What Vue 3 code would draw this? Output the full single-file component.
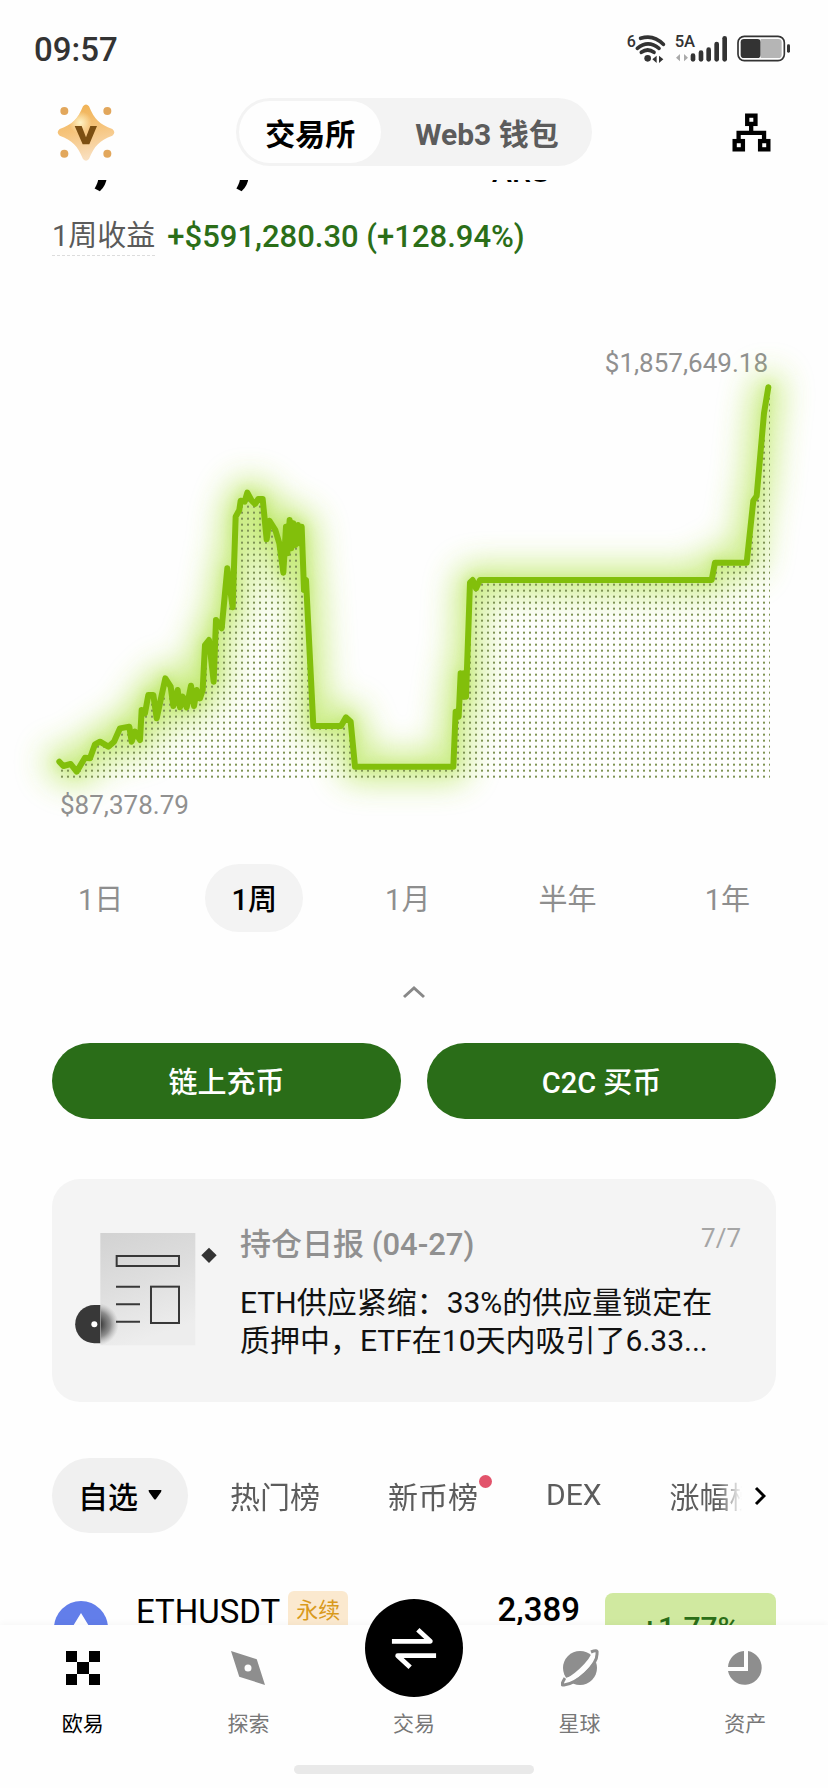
<script setup>
import { ref } from 'vue'

const ranges = ['1日', '1周', '1月', '半年', '1年']
const activeRange = ref('1周')
const boards = [
  { label: '热门榜' },
  { label: '新币榜', dot: true },
  { label: 'DEX' },
  { label: '涨幅榜' },
]

const series = [
  [58, 1295], [70, 1308], [92, 1302], [110, 1325], [135, 1283], [150, 1285], [165, 1243], [180, 1235],
  [205, 1250], [222, 1235], [240, 1195], [268, 1190], [275, 1235], [285, 1205], [300, 1230], [305, 1140],
  [315, 1150], [325, 1095], [340, 1095], [350, 1165], [376, 1045], [392, 1070], [400, 1128], [413, 1080],
  [420, 1132], [428, 1100], [440, 1132], [453, 1067], [462, 1128], [470, 1080], [480, 1105], [488, 1080],
  [495, 945], [507, 930], [521, 1055], [528, 870], [545, 895], [562, 715], [578, 832], [587, 560],
  [598, 540], [602, 512], [614, 515], [622, 488], [635, 512], [645, 522], [655, 507], [668, 507],
  [680, 628], [688, 572], [706, 600], [718, 640], [730, 728], [738, 590], [742, 670], [749, 570],
  [754, 655], [760, 580], [766, 645], [774, 585], [780, 640], [785, 590], [792, 780], [798, 750],
  [820, 1188], [903, 1188], [918, 1162], [932, 1175], [945, 1310], [1240, 1310], [1247, 1145],
  [1256, 1160], [1262, 1030], [1268, 1100], [1272, 1030], [1278, 1100], [1290, 758], [1298, 750],
  [1308, 775], [1320, 750], [2015, 750], [2025, 698], [2120, 698], [2140, 512], [2150, 498],
  [2172, 250], [2185, 172],
]
const line = series.map((p) => p.join(',')).join(' ')
const area = `58,1344 ${line} 2190,172 2190,1344`
</script>

<template>
  <div class="phone">
    <header class="top">
      <div class="status">
        <span class="clock">09:57</span>
        <svg class="status-icons" viewBox="630 100 510 96" role="img" aria-label="Wi-Fi, 5A, 电量">
          <g fill="#333">
            <text x="638" y="143" font-size="48" font-weight="500">6</text>
            <text x="782" y="143" font-size="50" font-weight="500">5A</text>
            <circle cx="701" cy="176" r="10" />
            <path d="M715 179l13-11v22zM748 179l-13-11v22z" />
            <rect x="830" y="161" width="14" height="25" rx="7" />
            <rect x="854" y="152" width="14" height="34" rx="7" />
            <rect x="877" y="143" width="14" height="43" rx="7" />
            <rect x="901" y="126" width="14" height="60" rx="7" />
            <rect x="925" y="109" width="14" height="77" rx="7" />
            <rect x="980" y="118" width="60" height="57" rx="10" />
            <rect x="1119" y="134" width="9" height="25" rx="4" />
          </g>
          <path d="M786 174l12-11v22zM822 174l-12-11v22z" fill="#aaa" />
          <path d="M1040 118h53q10 0 10 10v37q0 10-10 10h-53z" fill="#b5b5b5" />
          <rect x="972" y="110" width="139" height="73" rx="19" fill="none" stroke="#333" stroke-width="5" />
          <g fill="none" stroke="#333" stroke-width="11" stroke-linecap="round">
            <path d="M682 158q19-14 38 0" />
            <path d="M670 146q32-27 65 0" />
            <path d="M680 116q38-13 68 18" />
          </g>
        </svg>
      </div>
      <div class="bar">
        <button class="icon-btn vip" aria-label="VIP">
          <svg viewBox="170 310 174 176">
            <defs>
              <linearGradient id="gold" x1="0.4" y1="0" x2="0.6" y2="1">
                <stop offset="0" stop-color="#f0b254" />
                <stop offset="0.45" stop-color="#f6c47c" />
                <stop offset="1" stop-color="#f9e2c6" />
              </linearGradient>
              <radialGradient id="shine" cx="0.4" cy="0.32" r="0.2">
                <stop offset="0" stop-color="#fff3c4" />
                <stop offset="1" stop-color="#fff3c4" stop-opacity="0" />
              </radialGradient>
            </defs>
            <path d="M248 320q9-11 18 0c16 40 32 54 70 68q12 10 0 20c-38 14-54 30-70 70q-9 11-18 0c-16-40-32-56-70-70q-12-10 0-20c38-14 54-28 70-68z" fill="url(#gold)" />
            <path d="M248 320q9-11 18 0c16 40 32 54 70 68q12 10 0 20c-38 14-54 30-70 70q-9 11-18 0c-16-40-32-56-70-70q-12-10 0-20c38-14 54-28 70-68z" fill="url(#shine)" />
            <g fill="#e2a75c">
              <circle cx="192" cy="334" r="12" />
              <circle cx="321" cy="334" r="12" />
              <circle cx="192" cy="462" r="12" />
              <circle cx="321" cy="462" r="12" />
            </g>
            <path d="M223 379h21l13 34 13-34h20l-23 55h-20z" fill="#7c4f12" />
          </svg>
        </button>
        <nav class="switch" aria-label="模式">
          <button class="seg on">交易所</button>
          <button class="seg">Web3 钱包</button>
        </nav>
        <button class="icon-btn org" aria-label="网络">
          <svg viewBox="952 340 118 118" fill="none" stroke="#000" stroke-width="13">
            <rect x="998" y="348" width="25" height="25" />
            <rect x="960" y="425" width="25" height="25" />
            <rect x="1037" y="425" width="25" height="25" />
            <path d="M1010 376v22M972 422v-22h77v22" />
          </svg>
        </button>
      </div>
    </header>

    <main class="content">
      <div class="balance"><strong>1,857,649.18</strong><span>ARS</span></div>
      <div class="profit">
        <span class="profit-label">1周收益</span>
        <span class="profit-value">+$591,280.30 (+128.94%)</span>
      </div>

      <section class="chart" aria-label="收益走势">
        <p class="chart-high">$1,857,649.18</p>
        <svg class="plot" viewBox="-120 150 2484 1200" aria-hidden="true">
          <defs>
            <pattern id="dots" x="3" y="-1" width="18" height="18" patternUnits="userSpaceOnUse">
              <rect x="6" y="6" width="6" height="6" fill="#7f9455" />
            </pattern>
            <filter id="glow" x="-15%" y="-25%" width="130%" height="150%">
              <feGaussianBlur stdDeviation="48" />
            </filter>
            <filter id="halo" x="-10%" y="-15%" width="120%" height="130%">
              <feGaussianBlur stdDeviation="16" />
            </filter>
          </defs>
          <polyline :points="line" fill="none" stroke="#a6e02e" stroke-width="84" stroke-linejoin="round" stroke-linecap="round" opacity="0.6" filter="url(#glow)" />
          <polyline :points="line" fill="none" stroke="#9bdc1e" stroke-width="24" stroke-linejoin="round" stroke-linecap="round" opacity="0.3" filter="url(#halo)" />
          <polygon :points="area" fill="url(#dots)" />
          <polyline :points="line" fill="none" stroke="#82bf0b" stroke-width="18" stroke-linejoin="round" stroke-linecap="round" />
        </svg>
        <p class="chart-low">$87,378.79</p>
      </section>

      <div class="ranges">
        <button v-for="r in ranges" :key="r" class="range" :class="{ on: r === activeRange }" @click="activeRange = r">{{ r }}</button>
      </div>

      <button class="collapse" aria-label="收起">
        <svg viewBox="0 0 24 14"><path d="M2 12L12 3l10 9" fill="none" stroke="#888" stroke-width="3" /></svg>
      </button>

      <div class="actions">
        <button class="action">链上充币</button>
        <button class="action">C2C 买币</button>
      </div>

      <article class="card">
        <svg class="art" viewBox="100 185 432 350" aria-hidden="true">
          <defs>
            <linearGradient id="paper" x1="0" y1="0" x2="0.3" y2="1">
              <stop offset="0" stop-color="#d2d2d2" />
              <stop offset="0.5" stop-color="#dedede" />
              <stop offset="1" stop-color="#ededed" />
            </linearGradient>
            <radialGradient id="shade" gradientUnits="userSpaceOnUse" cx="170" cy="462" r="64">
              <stop offset="0.2" stop-color="#444" />
              <stop offset="0.6" stop-color="#666" stop-opacity="0.7" />
              <stop offset="1" stop-color="#999" stop-opacity="0" />
            </radialGradient>
          </defs>
          <rect x="179" y="188" width="285" height="337" fill="url(#paper)" />
          <path d="M180 388a64 74 0 0 1 0 148z" fill="url(#shade)" />
          <path d="M179 404v115h-18a57 57 0 0 1 0-115z" fill="#383838" />
          <circle cx="161" cy="462" r="9" fill="#fff" />
          <path d="M505 232l23 23-23 23-23-23z" fill="#333" />
          <g fill="none" stroke="#383838" stroke-width="6">
            <rect x="228" y="257" width="187" height="30" />
            <rect x="331" y="349" width="84" height="109" />
            <path d="M226 349h72M226 402h72M226 454h72" />
          </g>
        </svg>
        <div class="card-text">
          <div class="card-head">
            <h2>持仓日报 (04-27)</h2>
            <span>7/7</span>
          </div>
          <p>ETH供应紧缩：33%的供应量锁定在<br />质押中，ETF在10天内吸引了6.33...</p>
        </div>
      </article>

      <div class="boards">
        <button class="board-pick">自选
          <svg viewBox="0 0 14 10"><path d="M1 0h12q1 0 0 2L8 9q-1 1-2 0L1 2Q0 0 1 0z" /></svg>
        </button>
        <div class="board-list">
          <button v-for="b in boards" :key="b.label" class="board">{{ b.label }}<i v-if="b.dot" class="dot"></i></button>
        </div>
        <button class="more" aria-label="更多">
          <svg viewBox="0 0 12 20"><path d="M2 2l8 8-8 8" fill="none" stroke="#000" stroke-width="3" /></svg>
        </button>
      </div>

      <div class="coin">
        <svg class="coin-icon" viewBox="0 0 54 54" aria-hidden="true">
          <circle cx="27" cy="27" r="27" fill="#627eea" />
          <path d="M27 12l11 18-11 7-11-7zM16 33l11 7 11-7-11 14z" fill="#fff" />
        </svg>
        <div class="coin-name">ETHUSDT<em>永续</em></div>
        <div class="coin-price">2,389</div>
        <div class="coin-change">+1.77%</div>
      </div>
    </main>

    <footer class="dock">
      <nav class="tabs" aria-label="主导航">
        <a href="#" class="tab on">
          <svg viewBox="0 0 34 34"><path d="M0 0h11v11H0zM23 0h11v11H23zM11 11h12v12H11zM0 23h11v11H0zM23 23h11v11H23z" /></svg>
          <span>欧易</span>
        </a>
        <a href="#" class="tab">
          <svg viewBox="0 0 34 34"><path fill-rule="evenodd" d="M0 0l25 8q1 0 1 1l8 25-25-8q-1 0-1-1zM17 13.500a3.500 3.500 0 1 0 0 7 3.500 3.500 0 1 0 0-7z" /></svg>
          <span>探索</span>
        </a>
        <a href="#" class="tab trade">
          <span class="fab">
            <svg viewBox="0 0 50 50" fill="none" stroke="#fff" stroke-width="5" stroke-linejoin="round">
              <path d="M2 18h40L29 6M48 33H8l13 12" />
            </svg>
          </span>
          <span>交易</span>
        </a>
        <a href="#" class="tab">
          <svg class="planet" viewBox="0 0 38 38">
            <circle cx="19" cy="19" r="17" />
            <path d="M3 34C11 33 33 15 35 3" fill="none" stroke="#fefefe" stroke-width="8" />
            <path d="M4 29Q-1 37 3 36C15 35 37 16 36 4q1-4-6-1" fill="none" stroke="currentColor" stroke-width="3" />
            <path d="M5 31C16 29 28 17 32 7" fill="none" stroke="#fefefe" stroke-width="4" />
          </svg>
          <span>星球</span>
        </a>
        <a href="#" class="tab">
          <svg viewBox="0 0 34 34"><path d="M16 0v16H0A17 17 0 0 1 16 0zM20 0a17 17 0 1 1-20 20h20z" /></svg>
          <span>资产</span>
        </a>
      </nav>
      <div class="home-bar"></div>
    </footer>
  </div>
</template>

<style>
html,
body {
  margin: 0;
  background: #fefefe;
}
</style>

<style scoped>
.phone {
  height: 100vh;
  display: flex;
  flex-direction: column;
  overflow: hidden;
  background: #fefefe;
  color: #000;
  font-family: Roboto, "Noto Sans CJK SC", sans-serif;
}
button {
  border: 0;
  padding: 0;
  background: none;
  color: inherit;
  font: inherit;
  cursor: pointer;
  white-space: nowrap;
}
p,
h2 {
  margin: 0;
}
svg {
  display: block;
  flex: none;
}
.top {
  flex: none;
  height: 180px;
}
.status {
  height: 98px;
  padding: 0 34px;
  display: flex;
  align-items: center;
  justify-content: space-between;
}
.clock {
  font-size: 33px;
  font-weight: 500;
  color: #333;
}
.status-icons {
  width: 170px;
  height: 32px;
}
.bar {
  display: grid;
  grid-template-columns: 1fr auto 1fr;
  align-items: center;
  padding: 0 57px;
}
.icon-btn svg {
  width: 100%;
}
.vip {
  width: 58px;
}
.org {
  width: 39px;
  justify-self: end;
}
.switch {
  display: flex;
  padding: 3px;
  background: #f3f3f3;
  border-radius: 34px;
}
.seg {
  height: 62px;
  padding: 0 30px 0 34px;
  border-radius: 31px;
  font-size: 30px;
  font-weight: 700;
  color: #5c5c5c;
}
.seg.on {
  padding: 0 26px;
  background: #fefefe;
  color: #000;
}
.content {
  flex: 1;
  min-height: 0;
  overflow: hidden;
  display: flex;
  flex-direction: column;
}
.content > * {
  flex: none;
}
.balance {
  margin-top: -65px;
  padding: 0 52px;
  display: flex;
  align-items: flex-end;
  gap: 12px;
  line-height: 80px;
}
.balance strong {
  font-size: 72px;
  font-weight: 700;
}
.balance span {
  font-size: 30px;
  font-weight: 500;
  line-height: 46px;
}
.profit {
  display: flex;
  align-items: center;
  gap: 12px;
  margin-top: 22px;
  padding: 0 52px;
  line-height: 38px;
}
.profit-label {
  font-size: 29px;
  color: #5a5a5a;
  border-bottom: 1px dashed #dcdcdc;
}
.profit-value {
  font-size: 31px;
  font-weight: 500;
  color: #2b6e18;
}
.chart {
  margin-top: 92px;
  font-size: 26px;
  line-height: 30px;
  color: #909090;
}
.chart-high {
  padding: 0 60px;
  text-align: right;
}
.plot {
  width: 100%;
  height: auto;
  margin: 2px 0 10px;
  overflow: visible;
}
.chart-low {
  position: relative;
  padding: 0 60px;
}
.ranges {
  display: flex;
  justify-content: space-between;
  margin-top: 44px;
  padding: 0 52px;
}
.range {
  height: 68px;
  padding: 0 26px 2px;
  border-radius: 34px;
  font-size: 29px;
  color: #8e8e8e;
}
.range.on {
  background: #f3f3f3;
  color: #000;
  font-weight: 500;
}
.collapse {
  height: 32px;
  margin: 44px auto 0;
  padding: 0 12px;
}
.collapse svg {
  width: 24px;
}
.actions {
  display: flex;
  gap: 26px;
  margin-top: 35px;
  padding: 0 52px;
}
.action {
  flex: 1;
  height: 76px;
  padding-bottom: 2px;
  border-radius: 38px;
  background: #2a6d18;
  color: #fff;
  font-size: 29px;
  font-weight: 500;
}
.card {
  display: flex;
  align-items: flex-start;
  gap: 22px;
  margin: 60px 52px 0;
  padding: 45px 35px 42px 22px;
  background: #f4f4f4;
  border-radius: 28px;
}
.art {
  width: 144px;
  margin-top: 8px;
}
.card-text {
  flex: 1;
  min-width: 0;
}
.card-head {
  display: flex;
  justify-content: space-between;
  align-items: flex-start;
}
.card-head h2 {
  font-size: 31px;
  line-height: 42px;
  font-weight: 500;
  color: #909090;
}
.card-head span {
  font-size: 26px;
  line-height: 28px;
  color: #a5a5a5;
}
.card p {
  margin-top: 18px;
  font-size: 30px;
  line-height: 38px;
  color: #111;
  white-space: nowrap;
}
.boards {
  display: flex;
  align-items: center;
  margin-top: 56px;
  padding: 0 62px 0 52px;
}
.board-pick {
  display: flex;
  align-items: center;
  gap: 10px;
  height: 75px;
  padding: 0 26px 2px;
  border-radius: 38px;
  background: #f0f0f0;
  font-size: 30px;
  font-weight: 500;
}
.board-pick svg {
  width: 14px;
}
.board-list {
  flex: 1;
  min-width: 0;
  overflow: hidden;
  display: flex;
  gap: 68px;
  padding-left: 42px;
  -webkit-mask-image: linear-gradient(to right, #000 calc(100% - 24px), transparent);
  mask-image: linear-gradient(to right, #000 calc(100% - 24px), transparent);
}
.board {
  position: relative;
  height: 75px;
  padding-bottom: 2px;
  font-size: 30px;
  color: #5c5c5c;
}
.dot {
  position: absolute;
  top: 17px;
  right: -14px;
  width: 13px;
  height: 13px;
  border-radius: 50%;
  background: #e2536b;
}
.more {
  margin-left: 12px;
}
.more svg {
  width: 12px;
}
.coin {
  display: flex;
  align-items: center;
  margin-top: 61px;
  padding: 0 52px;
  height: 68px;
}
.coin-icon {
  width: 54px;
  margin-left: 2px;
}
.coin-name {
  flex: 1;
  align-self: flex-start;
  display: flex;
  align-items: center;
  gap: 8px;
  height: 34px;
  padding-left: 28px;
  font-size: 33px;
}
.coin-name em {
  padding: 0 8px;
  border-radius: 6px;
  background: #fbe9cf;
  color: #d99a1c;
  font-size: 22px;
  line-height: 40px;
  font-style: normal;
}
.coin-price {
  align-self: flex-start;
  margin-right: 25px;
  font-size: 33px;
  font-weight: 500;
  line-height: 32px;
}
.coin-change {
  width: 171px;
  border-radius: 8px;
  background: #d0e9a0;
  color: #2b6e18;
  font-size: 30px;
  font-weight: 500;
  line-height: 70px;
  text-align: center;
}
.dock {
  position: relative;
  flex: none;
  background: #fefefe;
  box-shadow: 0 -2px 6px rgba(0, 0, 0, 0.03);
}
.tabs {
  display: grid;
  grid-template-columns: repeat(5, 1fr);
}
.tab {
  display: flex;
  flex-direction: column;
  align-items: center;
  justify-content: flex-end;
  gap: 24px;
  height: 114px;
  color: #8e8e8e;
  font-size: 21px;
  line-height: 30px;
  text-decoration: none;
}
.tab > svg {
  width: 34px;
  fill: currentColor;
}
.tab > .planet {
  width: 38px;
  margin-bottom: -2px;
}
.tab > span {
  color: #777;
}
.tab.on,
.tab.on > span {
  color: #000;
}
.trade {
  gap: 12px;
}
.fab {
  display: grid;
  place-items: center;
  flex: none;
  width: 98px;
  height: 98px;
  border-radius: 50%;
  background: #000;
}
.fab svg {
  width: 48px;
}
.home-bar {
  width: 29%;
  height: 9px;
  margin: 26px auto 14px;
  border-radius: 5px;
  background: #e9e9e9;
}
</style>
